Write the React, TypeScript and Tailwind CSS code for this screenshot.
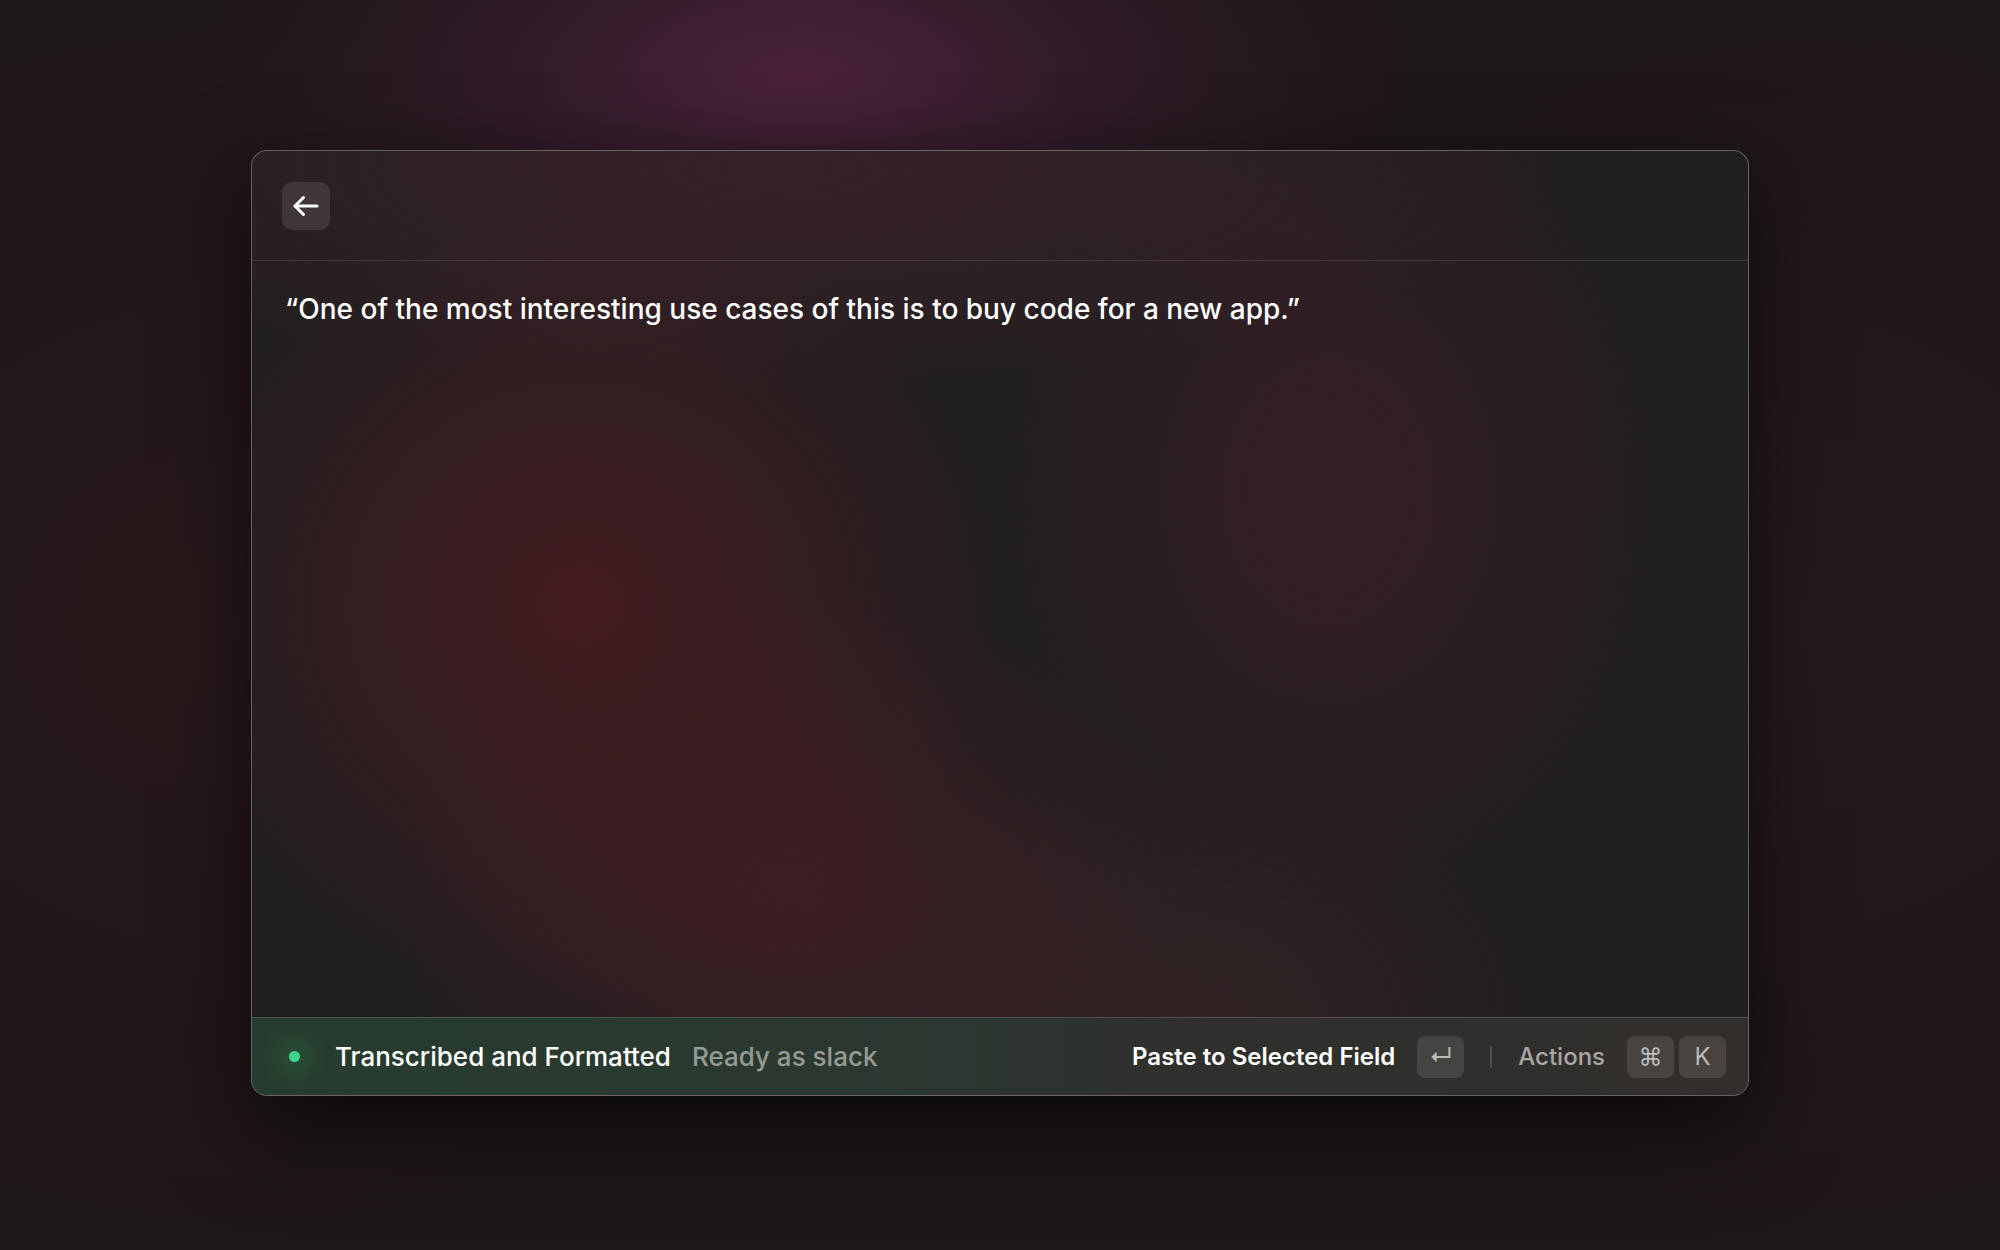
function Key({ children }: { children: React.ReactNode }) {
  return (
    <div className="flex h-[42px] w-[47px] items-center justify-center rounded-[8px] bg-white/10 text-[24px] text-[#bdbab8]">
      {children}
    </div>
  );
}

export default function App() {
  return (
    <div
      className="flex min-h-screen w-full justify-center bg-[#1e1718] bg-[image:radial-gradient(ellipse_600px_280px_at_40%_6%,#4b2239_0%,#2f1b27_50%,transparent_100%),radial-gradient(ellipse_700px_600px_at_12%_50%,#2a191b_0%,transparent_100%),radial-gradient(ellipse_600px_600px_at_90%_50%,#261a1c_0%,transparent_100%)] pt-[150px]"
      style={{ fontFamily: "Inter, 'Noto Sans', sans-serif" }}
    >
      <div className="flex h-[946px] w-[1498px] flex-col overflow-hidden rounded-[16px] border border-white/30 bg-[#221f1f] bg-[image:radial-gradient(ellipse_420px_400px_at_22%_48%,rgba(70,28,34,0.95)_0%,rgba(70,28,34,0.45)_55%,transparent_100%),radial-gradient(ellipse_400px_300px_at_36%_78%,rgba(68,30,36,0.85)_0%,transparent_100%),radial-gradient(ellipse_330px_420px_at_72%_36%,rgba(56,30,40,0.9)_0%,transparent_100%),radial-gradient(ellipse_800px_220px_at_35%_2%,rgba(64,34,44,0.75)_0%,transparent_100%),radial-gradient(ellipse_360px_260px_at_62%_92%,rgba(58,36,38,0.7)_0%,transparent_100%)] shadow-[0_30px_90px_rgba(0,0,0,0.65)]">
        <div className="flex h-[110px] shrink-0 items-center border-b border-white/10 px-[30px]">
          <button className="flex h-[48px] w-[48px] items-center justify-center rounded-[10px] bg-white/10 text-white">
            <svg width="28" height="28" viewBox="0 0 28 28" fill="none" stroke="currentColor" strokeWidth="3" strokeLinecap="round" strokeLinejoin="round">
              <path d="M3 14h22" />
              <path d="M11.5 5.5 3 14l8.5 8.5" />
            </svg>
          </button>
        </div>

        <div className="flex-1 px-[33px] pt-[31px]">
          <p className="text-[28px] leading-[34px] font-medium text-white">
            “One of the most interesting use cases of this is to buy code for a new app.”
          </p>
        </div>

        <div className="flex h-[78px] shrink-0 items-center border-t border-white/15 bg-[linear-gradient(90deg,#273c2f_0%,#2b3830_40%,#2f302d_62%,#322e2c_100%)] pr-[22px] pl-[37px]">
          <span className="h-[11px] w-[11px] rounded-full bg-[#41d48c] shadow-[0_0_24px_12px_rgba(65,212,140,0.15)]" />
          <span className="ml-[35px] text-[26px] font-medium text-white">Transcribed and Formatted</span>
          <span className="ml-[21px] text-[26px] font-medium text-[#959a95]">Ready as slack</span>

          <div className="ml-auto flex items-center">
            <span className="text-[24px] font-semibold text-white">Paste to Selected Field</span>
            <div className="ml-[22px]">
              <Key>↵</Key>
            </div>
            <span className="mx-[26px] h-[22px] w-[2px] rounded-full bg-white/15" />
            <span className="text-[24px] font-medium text-[#a9a7a5]">Actions</span>
            <div className="ml-[22px] flex gap-[5px]">
              <Key>⌘</Key>
              <Key>K</Key>
            </div>
          </div>
        </div>
      </div>
    </div>
  );
}
